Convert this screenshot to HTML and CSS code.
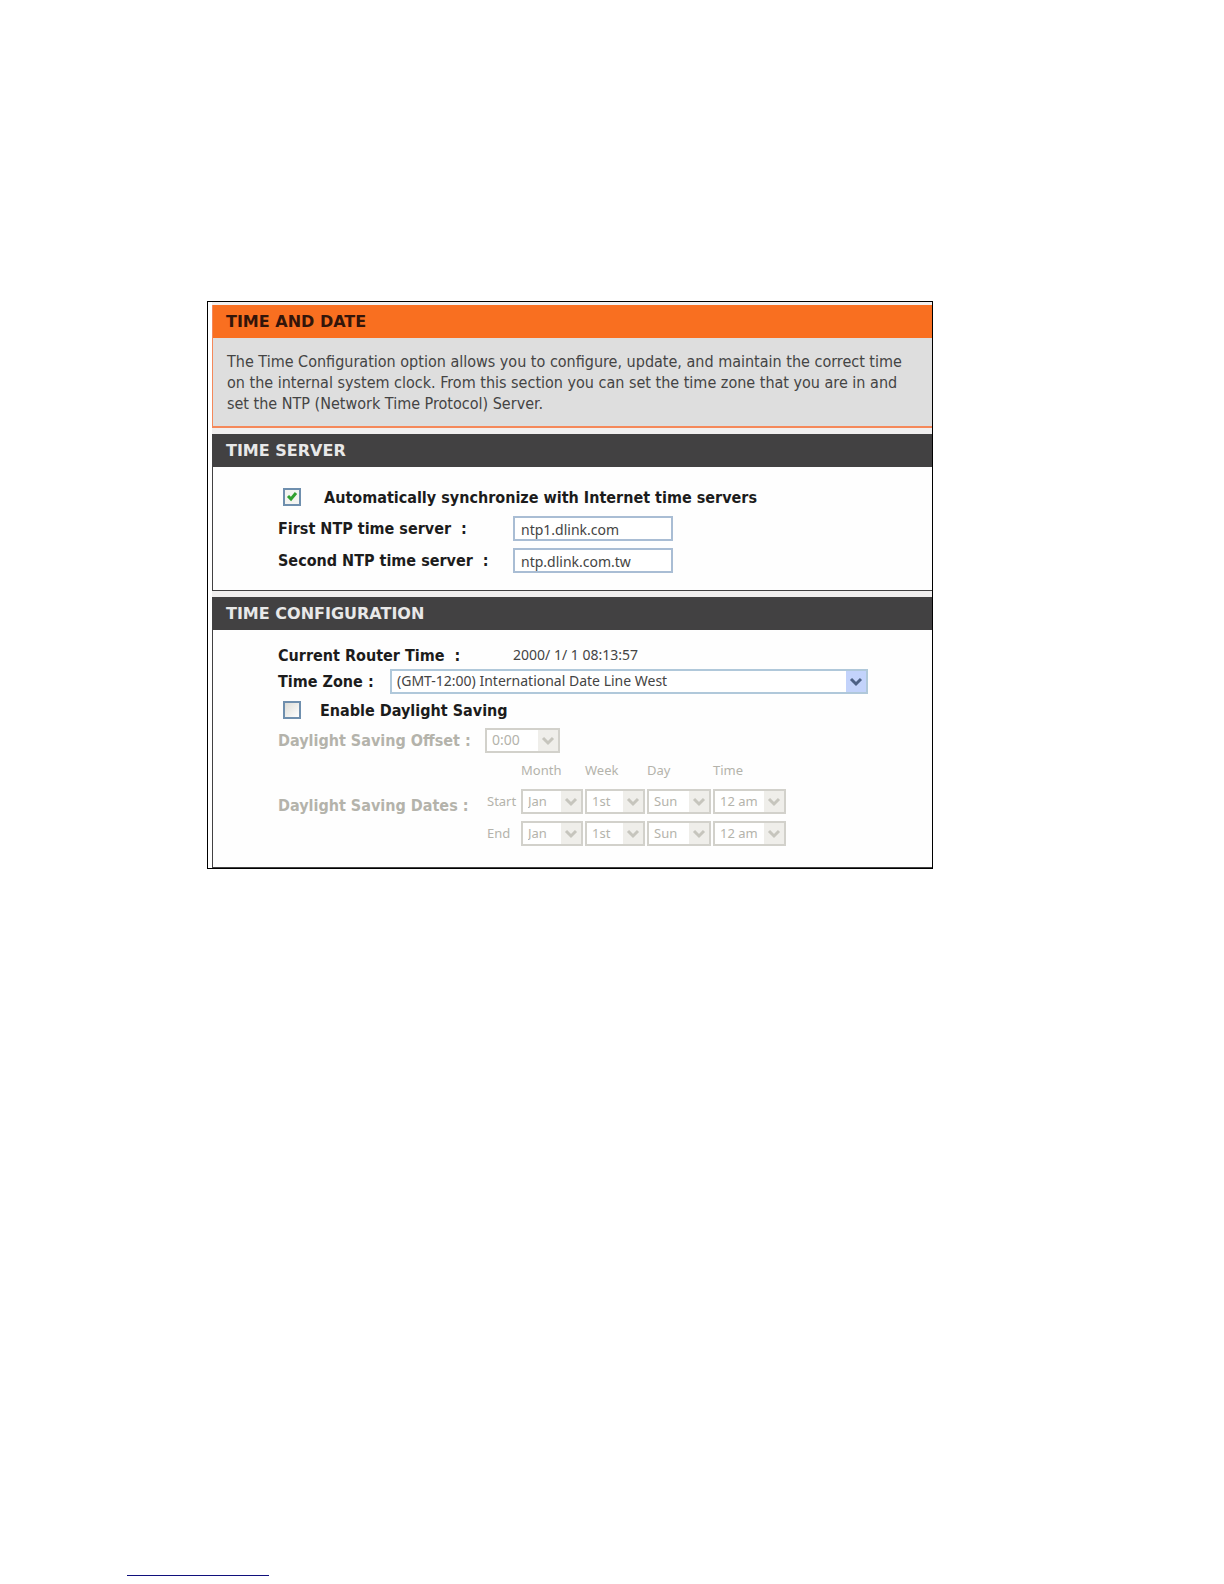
FILE: index.html
```html
<!DOCTYPE html>
<html lang="en">
<head>
<meta charset="utf-8">
<title>Time and Date</title>
<link rel="stylesheet" href="styles.css">
</head>
<body>
<main class="frame">
  <section class="panel panel-intro">
    <h1 class="panel-title">TIME AND DATE</h1>
    <p class="intro">The Time Configuration option allows you to configure, update, and maintain the correct time on the internal system clock. From this section you can set the time zone that you are in and set the NTP (Network Time Protocol) Server.</p>
  </section>

  <section class="panel">
    <h2 class="panel-title">TIME SERVER</h2>
    <div class="panel-body server-body">
      <div class="row row-check">
        <input class="check" type="checkbox" id="sync" checked>
        <label class="label" for="sync">Automatically synchronize with Internet time servers</label>
      </div>
      <div class="row row-field">
        <label class="label label-wide" for="ntp1">First NTP time server&nbsp; :</label>
        <input class="text" type="text" id="ntp1" value="ntp1.dlink.com">
      </div>
      <div class="row row-field">
        <label class="label label-wide" for="ntp2">Second NTP time server&nbsp; :</label>
        <input class="text" type="text" id="ntp2" value="ntp.dlink.com.tw">
      </div>
    </div>
  </section>

  <section class="panel">
    <h2 class="panel-title">TIME CONFIGURATION</h2>
    <div class="panel-body config-body">
      <div class="row row-time">
        <span class="label label-wide">Current Router Time&nbsp; :</span>
        <span class="value">2000/ 1/ 1 08:13:57</span>
      </div>
      <div class="row row-zone">
        <label class="label label-zone" for="zone">Time Zone :</label>
        <select class="select select-zone" id="zone"><option>(GMT-12:00) International Date Line West</option></select>
      </div>
      <div class="row row-check row-daylight">
        <input class="check" type="checkbox" id="daylight">
        <label class="label" for="daylight">Enable Daylight Saving</label>
      </div>
      <div class="row row-offset off">
        <label class="label label-mid" for="offset">Daylight Saving Offset :</label>
        <select class="select select-offset" id="offset" disabled><option>0:00</option></select>
      </div>
      <div class="row row-dates off">
        <span class="label label-mid">Daylight Saving Dates :</span>
        <table class="dates">
          <thead>
            <tr><td></td><th scope="col">Month</th><th scope="col">Week</th><th scope="col">Day</th><th scope="col">Time</th></tr>
          </thead>
          <tbody>
            <tr>
              <th scope="row" class="edge">Start</th>
              <td><select class="select month" aria-label="Start month" disabled><option>Jan</option></select></td>
              <td><select class="select week" aria-label="Start week" disabled><option>1st</option></select></td>
              <td><select class="select day" aria-label="Start day" disabled><option>Sun</option></select></td>
              <td><select class="select time" aria-label="Start time" disabled><option>12 am</option></select></td>
            </tr>
            <tr>
              <th scope="row" class="edge">End</th>
              <td><select class="select month" aria-label="End month" disabled><option>Jan</option></select></td>
              <td><select class="select week" aria-label="End week" disabled><option>1st</option></select></td>
              <td><select class="select day" aria-label="End day" disabled><option>Sun</option></select></td>
              <td><select class="select time" aria-label="End time" disabled><option>12 am</option></select></td>
            </tr>
          </tbody>
        </table>
      </div>
    </div>
  </section>
</main>
<footer class="footer"><hr class="rule"></footer>
</body>
</html>
```
FILE: styles.css
```css
* { box-sizing: border-box; }

body {
  margin: 0;
  min-height: 100vh;
  padding: 301px 291px 8px 127px;
  display: flex;
  flex-direction: column;
  justify-content: space-between;
  background: #fff;
  color: #222;
  font: 16px/21px "DejaVu Sans Condensed", "DejaVu Sans", sans-serif;
}

.frame {
  margin-left: 80px;
  padding: 3px 0 0 4px;
  border: 1px solid #000;
  display: flex;
  flex-direction: column;
  gap: 6px;
  background: linear-gradient(90deg, #fff 4px, #f1efef 4px);
}

.panel {
  border: solid #424142;
  border-width: 0 0 1px 1px;
  background: #fefefe;
}

.panel-title {
  margin: 0;
  padding: 0 13px;
  background: #424142;
  color: #e8e8e8;
  font: bold 16px/33px "DejaVu Sans", sans-serif;
}

.panel-intro {
  border-color: #f5885a;
  border-bottom-width: 2px;
  background: #dedede;
}

.panel-intro .panel-title {
  background: #f96f20;
  color: #33150a;
}

.intro {
  margin: 0;
  padding: 13px 24px 12px 14px;
  color: #444;
}

.server-body { padding: 15px 0 14px 65px; }
.config-body { padding: 13px 0 18px 65px; }

.row { display: flex; align-items: center; }
.row-check { height: 30px; gap: 23px; padding-left: 5px; }
.row-daylight { gap: 19px; }
.row-field { height: 32px; }
.row-time { height: 24px; }
.row-zone { height: 28px; }
.row-offset { height: 30px; }

.label { font-weight: bold; color: #1c1c1c; }
.label-wide { width: 235px; }
.label-zone { width: 112px; }
.label-mid { width: 207px; }
.off, .off .label { color: #b4b3ab; }
.row-dates .label { padding-top: 6px; }

.value { font: 14px/20px "Noto Sans", sans-serif; color: #444; }

.check {
  appearance: none;
  width: 18px;
  height: 18px;
  margin: 0;
  border: 2px solid #6f8fae;
  background: linear-gradient(135deg, #dcdcd7, #fff);
}

.check:checked {
  background: url("data:image/svg+xml,%3Csvg xmlns='http://www.w3.org/2000/svg' viewBox='0 0 14 14'%3E%3Cpath d='M3 6l3 3 5-6' fill='none' stroke='%2330a030' stroke-width='3'/%3E%3C/svg%3E") center / 14px no-repeat, #f4f4f1;
}

.text, .select {
  height: 25px;
  margin: 0;
  padding: 2px 6px 0;
  border: 2px solid #a9bdd4;
  border-radius: 0;
  background-color: #fff;
  color: #444;
  font: 14px/20px "Noto Sans", sans-serif;
}

.text { width: 160px; }

.select {
  appearance: none;
  padding: 0 5px;
  border-color: #b0c8da;
  background: url("data:image/svg+xml,%3Csvg xmlns='http://www.w3.org/2000/svg' viewBox='0 0 20 21'%3E%3Cpath d='M0 0h20v21H0z' fill='%23c3d3fb'/%3E%3Cpath d='M5 8l5 5 5-5' fill='none' stroke='%234d6185' stroke-width='3'/%3E%3C/svg%3E") right center / 20px 21px no-repeat #fff;
}

.select:disabled {
  opacity: 1;
  border-color: #d2d1cb;
  color: #b4b3ab;
  background-image: url("data:image/svg+xml,%3Csvg xmlns='http://www.w3.org/2000/svg' viewBox='0 0 20 21'%3E%3Cpath d='M0 0h20v21H0z' fill='%23efeeea'/%3E%3Cpath d='M5 8l5 5 5-5' fill='none' stroke='%23c6c5bd' stroke-width='3'/%3E%3C/svg%3E");
}

.select-zone { width: 478px; }
.select-offset { width: 75px; }
.month { width: 62px; }
.week { width: 60px; }
.day { width: 64px; }
.time { width: 73px; }

.dates { border-collapse: collapse; }
.dates th { padding: 0; text-align: left; font: 13px/20px "Noto Sans", sans-serif; }
.dates td { padding: 0 2px 0 0; }
.dates tr { height: 32px; }
.dates thead tr { height: 30px; }
.dates .edge { width: 36px; padding-left: 2px; }
.dates select { display: block; font-size: 13px; }

.footer { display: flex; }
.rule { width: 142px; margin: 0; border: 0; border-top: 1px solid #10107c; }
```
